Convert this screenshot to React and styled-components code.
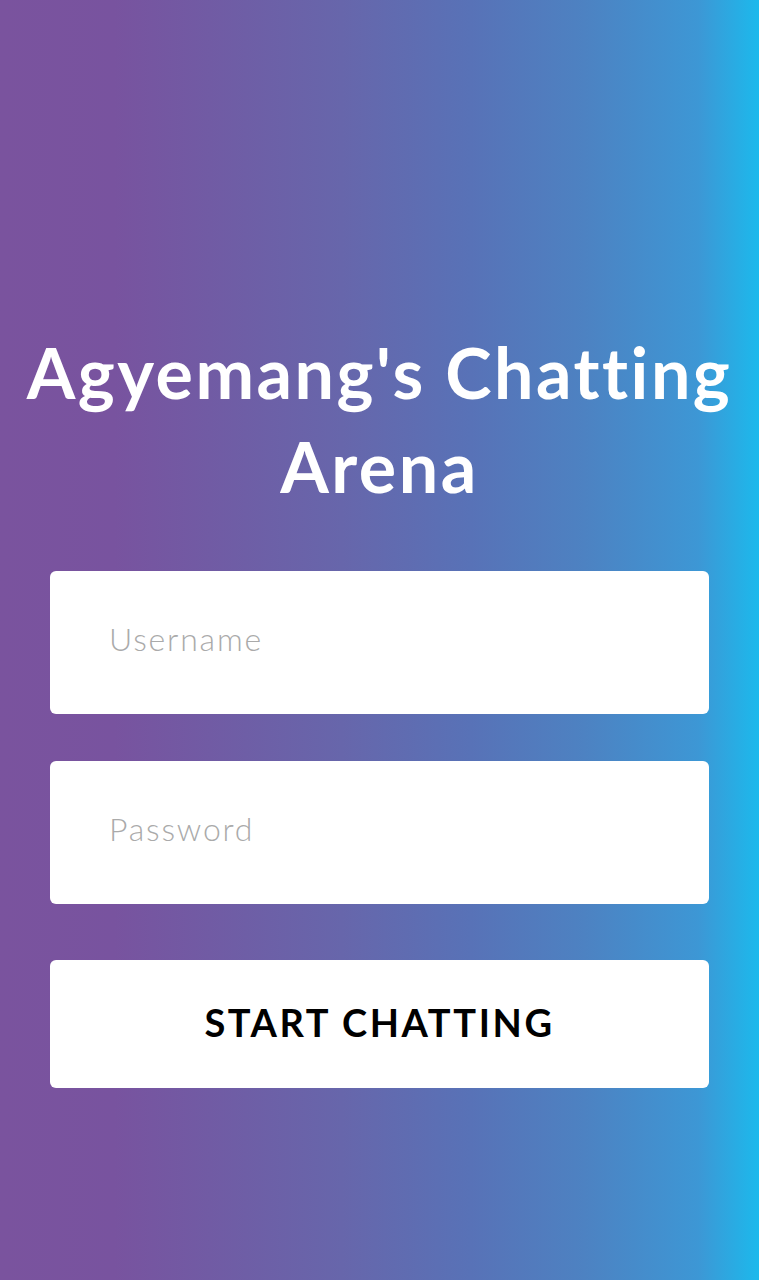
import React from 'react';
import styled, { createGlobalStyle } from 'styled-components';

const GlobalStyle = createGlobalStyle`
  html, body {
    margin: 0;
    padding: 0;
  }
  body {
    font-family: Lato, "Open Sans", sans-serif;
  }
`;

const App = () => {
  return (
    <>
      <GlobalStyle />
      <Page>
        <Title>
          Agyemang's Chatting
          <br />
          Arena
        </Title>
        <Form onSubmit={(e) => e.preventDefault()}>
          <Field type="text" placeholder="Username" />
          <Field type="password" placeholder="Password" />
          <SubmitBtn type="submit">START CHATTING</SubmitBtn>
        </Form>
      </Page>
    </>
  );
};

export default App;

const Page = styled.div`
  width: 759px;
  height: 1280px;
  box-sizing: border-box;
  padding-top: 325px;
  display: flex;
  flex-direction: column;
  align-items: center;
  background: linear-gradient(
    to right,
    #7a539e 0%,
    #78539f 15%,
    #6766ab 45%,
    #5872b7 62%,
    #4d82c2 77%,
    #3d97d5 92%,
    #1cb9ec 100%
  );
`;

const Title = styled.h1`
  margin: 0;
  color: #fff;
  font-family: Lato, "Open Sans", sans-serif;
  font-weight: 700;
  font-size: 70px;
  line-height: 94px;
  letter-spacing: 2.5px;
  text-align: center;
  white-space: nowrap;
`;

const Form = styled.form`
  margin-top: 58px;
  width: 659px;
  display: flex;
  flex-direction: column;
`;

const Field = styled.input`
  height: 143px;
  box-sizing: border-box;
  border: none;
  border-radius: 6px;
  background: #fff;
  padding: 0 59px 9px;
  margin-bottom: 47px;
  font-family: Lato, "Open Sans", sans-serif;
  font-weight: 300;
  font-size: 32px;
  letter-spacing: 1.8px;
  color: #333;
  outline: none;

  &::placeholder {
    color: #aaaaaa;
  }
`;

const SubmitBtn = styled.button`
  margin-top: 9px;
  height: 128px;
  padding: 0 0 4px;
  border: none;
  border-radius: 6px;
  background: #fff;
  color: #000;
  font-family: Lato, "Open Sans", sans-serif;
  font-weight: 700;
  font-size: 38px;
  letter-spacing: 2.6px;
  cursor: pointer;
`;
